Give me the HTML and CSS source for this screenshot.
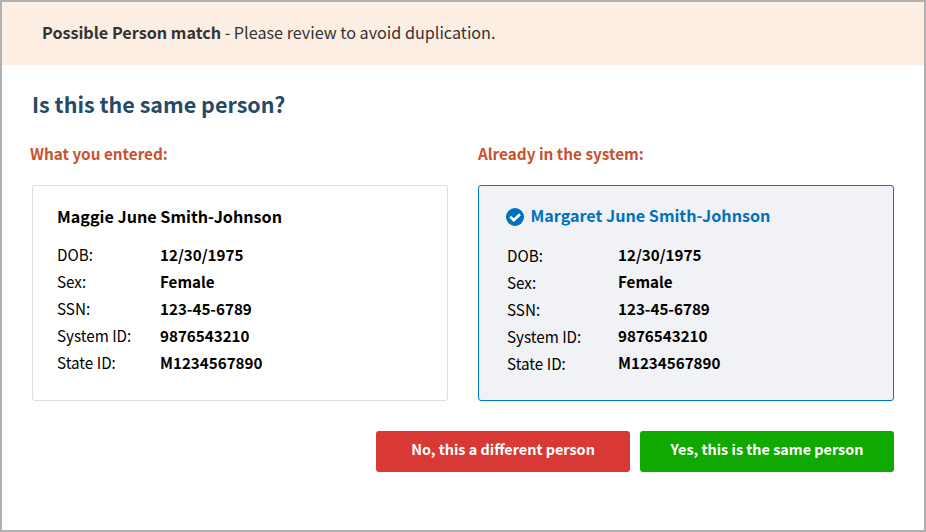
FILE: index.html
```html
<!DOCTYPE html>
<html lang="en">
<head>
<meta charset="utf-8">
<title>Possible Person match</title>
<link rel="stylesheet" href="styles.css">
</head>
<body>
<main class="dialog">
  <p class="banner"><strong>Possible Person match</strong> - Please review to avoid duplication.</p>
  <div class="content">
    <h1 class="title">Is this the same person?</h1>
    <div class="columns">
      <section class="column">
        <h2 class="column-title column-title-entered">What you entered:</h2>
        <article class="card">
          <h3 class="name">Maggie June Smith-Johnson</h3>
          <dl class="details">
            <dt>DOB:</dt><dd>12/30/1975</dd>
            <dt>Sex:</dt><dd>Female</dd>
            <dt>SSN:</dt><dd>123-45-6789</dd>
            <dt>System ID:</dt><dd>9876543210</dd>
            <dt>State ID:</dt><dd>M1234567890</dd>
          </dl>
        </article>
      </section>
      <section class="column">
        <h2 class="column-title">Already in the system:</h2>
        <article class="card card-match">
          <h3 class="name">
            <svg class="check" viewBox="0 0 18 18" aria-hidden="true"><circle cx="9" cy="9" r="9"/><path d="M4.2 8.8 7.8 12.2 14 6.2"/></svg>
            <span>Margaret June Smith-Johnson</span>
          </h3>
          <dl class="details">
            <dt>DOB:</dt><dd>12/30/1975</dd>
            <dt>Sex:</dt><dd>Female</dd>
            <dt>SSN:</dt><dd>123-45-6789</dd>
            <dt>System ID:</dt><dd>9876543210</dd>
            <dt>State ID:</dt><dd>M1234567890</dd>
          </dl>
        </article>
      </section>
    </div>
    <div class="actions">
      <button class="button button-no" type="button">No, this a different person</button>
      <button class="button button-yes" type="button">Yes, this is the same person</button>
    </div>
  </div>
</main>
</body>
</html>
```

FILE: styles.css
```css
* { box-sizing: border-box; }

body {
  margin: 0;
  background: #fff;
  color: #000;
  font-family: "Noto Sans CJK SC", "Open Sans", sans-serif;
}

h1, h2, h3, p, dl, dd { margin: 0; }

.dialog {
  height: 532px;
  border: 2px solid #b0b0b0;
}

.banner {
  height: 63px;
  padding-left: 40px;
  background: #fceee3;
  color: #333;
  font-size: 16.18px;
  line-height: 60px;
}

.content { padding: 23px 30px 0; }

.title {
  color: #264a64;
  font-size: 21.5px;
  line-height: 32px;
}

.columns {
  display: grid;
  grid-template-columns: 1fr 1fr;
  gap: 30px;
  margin-top: 21px;
}

.column-title {
  color: #c7522f;
  font-size: 15.3px;
  line-height: 24px;
}

.column-title-entered { margin-left: -2px; }

.card {
  height: 216px;
  margin-top: 20px;
  padding: 18px 24px;
  border: 1px solid #dcdcdc;
  border-radius: 3px;
}

.card-match {
  padding-left: 28px;
  border-color: #0078d0;
  background: #f1f2f6;
}

.name {
  display: flex;
  align-items: center;
  gap: 6.5px;
  font-size: 16.15px;
  line-height: 24px;
}

.card-match .name { color: #0071bc; margin: -1px 0 0 -1px; }

.check { width: 18px; height: 18px; margin-top: 3px; }
.check circle { fill: #0071bc; }
.check path { fill: none; stroke: #fff; stroke-width: 2.6; }

.details {
  display: grid;
  grid-template-columns: 103px 1fr;
  grid-auto-rows: 27px;
  margin-top: 13px;
  line-height: 27px;
}

.card-match .details { grid-template-columns: 111px 1fr; margin-top: 14px; }

dt {
  font-size: 16px;
  transform: scaleX(0.95);
  transform-origin: left;
}
.card-match dt { padding-top: 1px; }
dd { font-size: 15.18px; font-weight: 700; }

.actions {
  display: flex;
  justify-content: flex-end;
  gap: 10px;
  margin-top: 30px;
}

.button {
  width: 254px;
  height: 41px;
  padding: 0 0 5px;
  border: 0;
  border-radius: 3px;
  color: #fff;
  font: 700 14.4px/36px "Noto Sans CJK SC", "Open Sans", sans-serif;
}

.button-no { background: #d93934; }
.button-yes { background: #0fa900; }
```
